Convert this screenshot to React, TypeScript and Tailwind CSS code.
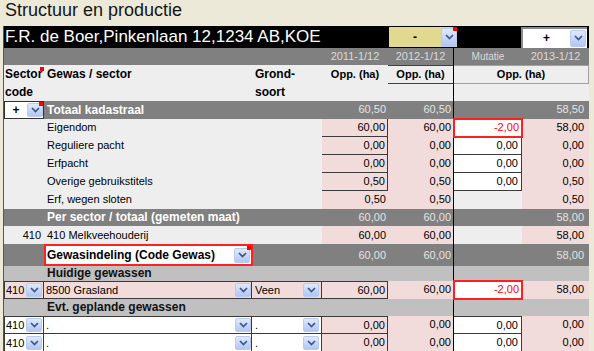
import type { ReactNode } from "react";

type Tone = "dark" | "pink" | "light" | "mid" | "white";

type NumSpec = { v?: string; tone: Tone; box?: boolean; top?: boolean; red?: boolean };

const toneCls: Record<Tone, string> = {
  dark: "bg-[#808080] text-[#e4e4e4]",
  pink: "bg-[#f2dcdb] text-black",
  light: "bg-[#eeeeee] text-black",
  mid: "bg-[#c0c0c0] text-black",
  white: "bg-white text-black",
};

const d = (v = ""): NumSpec => ({ v, tone: "dark" });
const p = (v: string, box = false, top = false): NumSpec => ({ v, tone: "pink", box, top });
const w = (v: string, top = false): NumSpec => ({ v, tone: "white", box: true, top });
const red = (v: string): NumSpec => ({ v, tone: "white", red: true });
const l = (): NumSpec => ({ tone: "light" });
const m = (): NumSpec => ({ tone: "mid" });

function Chevron() {
  return (
    <svg width="9" height="6" viewBox="0 0 9 6">
      <path d="M1 1 L4.5 4.5 L8 1" fill="none" stroke="#3b5689" strokeWidth="1.7" />
    </svg>
  );
}

function DropBtn({ h = "h-[14px]" }: { h?: string }) {
  return (
    <span
      className={`flex ${h} w-[16px] shrink-0 items-center justify-center rounded-[2px] border border-[#b9cbf0] bg-linear-to-b from-[#e0e9fd] to-[#b2c6f3]`}
    >
      <Chevron />
    </span>
  );
}

function Marker({ top = "top-0" }: { top?: string }) {
  return <span className={`absolute right-0 ${top} h-[4px] w-[4px] bg-[#ff0000]`} />;
}

function NumCell({ spec, width, pr, line }: { spec: NumSpec; width: string; pr: string; line?: boolean }) {
  return (
    <div className={`relative h-full ${width} ${line ? "border-l border-black" : ""} ${toneCls[spec.tone]}`}>
      <div
        className={`h-full text-right ${pr} ${spec.box ? "border-r border-b border-[#3a3a3a]" : ""} ${
          spec.top ? "border-t" : ""
        } ${spec.red ? "text-[#ff0000]" : ""}`}
      >
        {spec.v}
      </div>
      {spec.red && <span className="absolute -inset-[1px] z-10 border-2 border-[#ff1f1f]" />}
    </div>
  );
}

function Nums({ cells }: { cells: NumSpec[] }) {
  return (
    <>
      <NumCell spec={cells[0]} width="w-[66px]" pr="pr-[2px]" />
      <NumCell spec={cells[1]} width="w-[65px]" pr="pr-[2px]" />
      <NumCell spec={cells[2]} width="w-[69px]" pr="pr-[3px]" line />
      <NumCell spec={cells[3]} width="w-[67px]" pr="pr-[5px]" />
    </>
  );
}

function Row({ h, leading, children }: { h: string; leading: string; children: ReactNode }) {
  return <div className={`flex ${h} ${leading} text-[11px]`}>{children}</div>;
}

function LabelRow({ label, cells }: { label: string; cells: NumSpec[] }) {
  return (
    <Row h="h-[18px]" leading="leading-[17px]">
      <div className="w-[318px] bg-[#eeeeee] pl-[43px]">{label}</div>
      <Nums cells={cells} />
    </Row>
  );
}

function SectionRow({ label, h, leading, tone, cells }: { label: string; h: string; leading: string; tone: Tone; cells: NumSpec[] }) {
  return (
    <Row h={h} leading={leading}>
      <div className={`w-[318px] pl-[43px] text-[12px] font-bold ${tone === "dark" ? "bg-[#808080] text-white" : "bg-[#c0c0c0] text-[#111]"}`}>
        {label}
      </div>
      <Nums cells={cells} />
    </Row>
  );
}

function CropRow({ code, gewas, grond, cells, top }: { code: string; gewas: string; grond: string; cells: NumSpec[]; top?: boolean }) {
  const bg = gewas === "." ? "bg-white" : "bg-[#f2dcdb]";
  return (
    <Row h="h-[18px]" leading="leading-[16px]">
      <div className={`flex w-[40px] items-center border-x border-b border-[#3a3a3a] ${top ? "border-t" : ""} ${bg}`}>
        <span className="w-[21px] pl-[1px]">{code}</span>
        <DropBtn />
      </div>
      <div className={`flex w-[208px] items-center border-r border-b border-[#3a3a3a] pl-[2px] ${top ? "border-t" : ""} ${bg}`}>
        <span className="flex-1">{gewas}</span>
        <DropBtn />
      </div>
      <div className={`flex w-[70px] items-center border-r border-b border-[#3a3a3a] pl-[3px] pr-[2px] ${top ? "border-t" : ""} ${bg}`}>
        <span className="flex-1">{grond}</span>
        <DropBtn />
      </div>
      <Nums cells={cells} />
    </Row>
  );
}

export default function App() {
  return (
    <div className="h-[351px] w-[594px] overflow-hidden bg-[#ece9d8] font-['Liberation_Sans',Arial,sans-serif] text-black">
      <div className="h-[26px] pl-[5px] text-[18px] leading-[20px] text-[#151515]">Structuur en productie</div>

      <div className="ml-[3px] w-[586px] border-l border-[#555555]">
        {/* farm bar */}
        <div className="flex h-[22px] items-center bg-black">
          <div className="w-[385px] whitespace-nowrap pl-[1px] text-[17px] leading-[22px] text-white">
            F.R. de Boer,Pinkenlaan 12,1234 AB,KOE
          </div>
          <div className="relative flex h-[20px] w-[68px] items-center bg-[#e0d98f]">
            <span className="flex-1 text-center text-[12px] font-bold">-</span>
            <DropBtn h="h-[19px]" />
            <Marker />
          </div>
          <div className="w-[64px]" />
          <div className="flex h-[21px] w-[66px] items-center border-l-2 border-t-2 border-[#8a8a8a] bg-white pr-[1px]">
            <span className="flex-1 text-center text-[12px] font-bold">+</span>
            <DropBtn h="h-[17px]" />
          </div>
        </div>

        {/* years */}
        <div className="flex h-[17px] bg-[#808080] text-[11px] leading-[17px] text-[#dadada]">
          <div className="w-[318px]" />
          <div className="w-[66px] text-center">2011-1/12</div>
          <div className="w-[65px] text-center">2012-1/12</div>
          <div className="w-[69px] border-l border-black text-center text-[10px]">Mutatie</div>
          <div className="w-[67px] text-center">2013-1/12</div>
        </div>

        {/* column headers */}
        <div className="flex h-[36px] bg-[#eeeeee] text-[12px] font-bold leading-[18px]">
          <div className="relative w-[40px] pl-[1px]">
            Sector
            <br />
            code
            <Marker top="top-[2px]" />
          </div>
          <div className="w-[208px] pl-[3px]">Gewas / sector</div>
          <div className="w-[70px] pl-[3px]">
            Grond-
            <br />
            soort
          </div>
          <div className="w-[66px] text-center text-[11px]">Opp. (ha)</div>
          <div className="w-[65px]">
            <div className="h-[19px] border-y border-[#404040] text-center text-[11px] leading-[17px]">Opp. (ha)</div>
          </div>
          <div className="w-[136px] border-l border-black">
            <div className="h-[19px] border-y border-r border-[#a0a0a0] text-center text-[11px] leading-[17px]">Opp. (ha)</div>
          </div>
        </div>

        {/* totaal kadastraal */}
        <Row h="h-[18px]" leading="leading-[16px]">
          <div className="flex w-[318px] items-center bg-[#808080]">
            <div className="relative flex h-full w-[40px] items-center border border-[#333333] bg-white">
              <span className="w-[22px] text-center text-[12px] font-bold">+</span>
              <DropBtn />
              <Marker />
            </div>
            <span className="pl-[3px] text-[12px] font-bold text-white">Totaal kadastraal</span>
          </div>
          <Nums cells={[d("60,50"), d("60,50"), d(), d("58,50")]} />
        </Row>

        <LabelRow label="Eigendom" cells={[p("60,00", true), p("60,00"), red("-2,00"), p("58,00")]} />
        <LabelRow label="Reguliere pacht" cells={[p("0,00", true), p("0,00"), w("0,00"), p("0,00")]} />
        <LabelRow label="Erfpacht" cells={[p("0,00", true), p("0,00"), w("0,00"), p("0,00")]} />
        <LabelRow label="Overige gebruikstitels" cells={[p("0,50", true), p("0,50"), w("0,00"), p("0,50")]} />
        <LabelRow label="Erf, wegen sloten" cells={[p("0,50"), p("0,50"), l(), p("0,50")]} />

        <SectionRow
          label="Per sector / totaal (gemeten maat)"
          h="h-[17px]"
          leading="leading-[17px]"
          tone="dark"
          cells={[d("60,00"), d("60,00"), d(), d("58,00")]}
        />

        <Row h="h-[18px]" leading="leading-[18px]">
          <div className="w-[40px] bg-[#eeeeee] pr-[3px] text-right">410</div>
          <div className="w-[278px] bg-[#eeeeee] pl-[3px]">410 Melkveehouderij</div>
          <Nums cells={[p("60,00"), p("60,00"), l(), p("58,00")]} />
        </Row>

        {/* gewasindeling */}
        <Row h="h-[22px]" leading="leading-[22px]">
          <div className="w-[40px] bg-[#808080]" />
          <div className="relative flex w-[209px] items-center border-2 border-[#ff2020] bg-white pl-[1px] pr-[1px] text-[12px] font-bold">
            <span className="flex-1">Gewasindeling (Code Gewas)</span>
            <DropBtn h="h-[15px]" />
            <Marker />
          </div>
          <div className="w-[69px] bg-[#808080]" />
          <Nums cells={[d("60,00"), d("60,00"), d(), d("58,00")]} />
        </Row>

        <SectionRow label="Huidige gewassen" h="h-[15px]" leading="leading-[15px]" tone="mid" cells={[m(), m(), m(), m()]} />

        <CropRow
          code="410"
          gewas="8500 Grasland"
          grond="Veen"
          top
          cells={[p("60,00", true, true), p("60,00"), red("-2,00"), p("58,00")]}
        />

        <SectionRow label="Evt. geplande gewassen" h="h-[17px]" leading="leading-[17px]" tone="mid" cells={[m(), m(), m(), m()]} />

        <CropRow code="410" gewas="." grond="." top cells={[p("0,00", true, true), p("0,00"), w("0,00", true), p("0,00")]} />
        <CropRow code="410" gewas="." grond="." cells={[p("0,00", true), p("0,00"), w("0,00"), p("0,00")]} />
      </div>
    </div>
  );
}
